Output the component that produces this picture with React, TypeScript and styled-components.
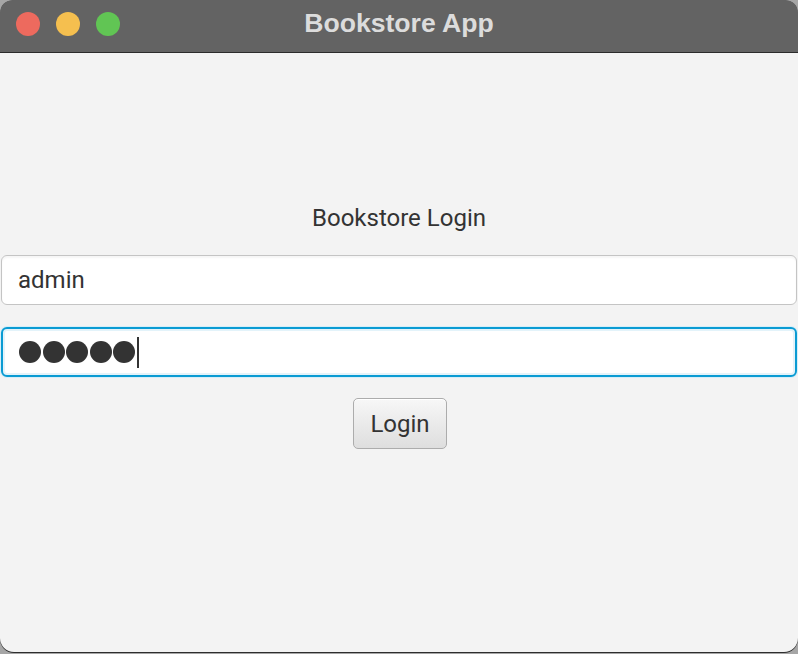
import React from "react";
import styled, { createGlobalStyle } from "styled-components";

const Global = createGlobalStyle`
  html, body {
    margin: 0;
    padding: 0;
    background: #a6a6a6;
    width: 798px;
    height: 654px;
    overflow: hidden;
  }
  * { box-sizing: border-box; }
`;

const Window = styled.div`
  width: 798px;
  height: 652px;
  border-radius: 12px 12px 14px 14px;
  overflow: hidden;
  background: #f3f3f3;
  box-shadow: 0 1px 0 #2e2e2e;
  display: flex;
  flex-direction: column;
`;

const TitleBar = styled.div`
  height: 53px;
  flex: none;
  background: #636363;
  border-bottom: 1px solid #2b2b2b;
  position: relative;
  display: flex;
  align-items: center;
  justify-content: center;
`;

const Lights = styled.div`
  position: absolute;
  left: 16px;
  top: 12px;
  display: flex;
  gap: 16px;
`;

const Light = styled.span<{ $color: string }>`
  width: 24px;
  height: 24px;
  border-radius: 50%;
  background: ${(p) => p.$color};
`;

const Title = styled.div`
  font-family: "Liberation Sans", Arial, sans-serif;
  font-weight: bold;
  font-size: 26.6px;
  color: #dcdcdc;
  margin-top: -6px;
`;

const Content = styled.div`
  flex: 1;
  display: flex;
  flex-direction: column;
  align-items: center;
  padding-top: 150px;
  font-family: "Roboto", "Liberation Sans", sans-serif;
  color: #333333;
`;

const Heading = styled.div`
  font-size: 24px;
  height: 30px;
  line-height: 30px;
`;

const TextField = styled.div`
  align-self: stretch;
  margin: 22px 1px 0;
  height: 50px;
  background: #ffffff;
  border: 1px solid #c4c4c4;
  border-radius: 6px;
  box-shadow: inset 0 2px 2px rgba(0, 0, 0, 0.04);
  display: flex;
  align-items: center;
  padding-left: 16px;
  font-size: 24px;
`;

const PasswordField = styled.div`
  align-self: stretch;
  margin: 22px 1px 0;
  height: 50px;
  background: #ffffff;
  border: 2px solid #0a9bd3;
  border-radius: 6px;
  box-shadow: 0 0 0 1px #d6eef8, inset 0 0 0 2px #e3f3fa;
  display: flex;
  align-items: center;
  padding-left: 16px;
  gap: 1.5px;
`;

const Dot = styled.span`
  width: 22px;
  height: 22px;
  border-radius: 50%;
  background: #333333;
`;

const Caret = styled.span`
  width: 2px;
  height: 31px;
  background: #333333;
`;

const Button = styled.button`
  margin-top: 21px;
  margin-left: 2px;
  width: 94px;
  height: 51px;
  font-family: "Roboto", "Liberation Sans", sans-serif;
  font-size: 24px;
  color: #333333;
  border: 1px solid #acacac;
  border-radius: 5px;
  background: linear-gradient(#f7f7f7, #dedede);
  box-shadow: inset 0 1px 0 #ffffff;
  padding: 0;
`;

export default function App() {
  return (
    <>
      <Global />
      <Window>
        <TitleBar>
          <Lights>
            <Light $color="#ed6a5e" />
            <Light $color="#f5bf4f" />
            <Light $color="#61c554" />
          </Lights>
          <Title>Bookstore App</Title>
        </TitleBar>
        <Content>
          <Heading>Bookstore Login</Heading>
          <TextField>admin</TextField>
          <PasswordField>
            <Dot />
            <Dot />
            <Dot />
            <Dot />
            <Dot />
            <Caret />
          </PasswordField>
          <Button>Login</Button>
        </Content>
      </Window>
    </>
  );
}
